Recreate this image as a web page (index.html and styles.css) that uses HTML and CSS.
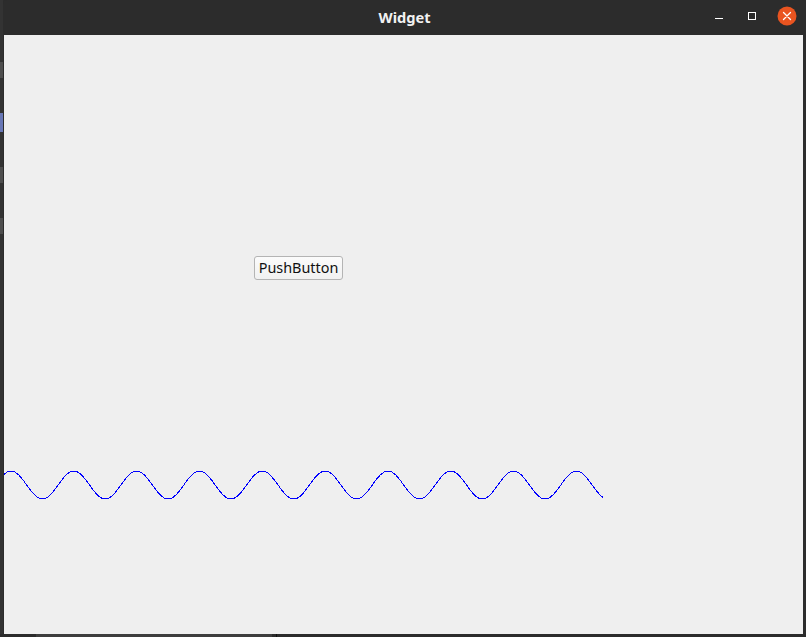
FILE: index.html
```html
<!DOCTYPE html>
<html>
<head>
<meta charset="utf-8">
<link rel="stylesheet" href="styles.css">
</head>
<body>
<div class="screen">
  <div class="desk-left">
    <div class="dock-item"></div>
    <div class="dock-item active"></div>
    <div class="dock-item"></div>
    <div class="dock-item"></div>
  </div>
  <div class="window">
    <div class="titlebar">
      <span class="title">Widget</span>
      <div class="controls">
        <span class="ctl min"><svg width="10" height="10" viewBox="0 0 10 10"><rect x="1" y="7" width="8" height="1" fill="#ffffff"/></svg></span>
        <span class="ctl max"><svg width="10" height="10" viewBox="0 0 10 10"><rect x="1.5" y="1.5" width="7" height="7" fill="none" stroke="#ffffff" stroke-width="1"/></svg></span>
        <span class="ctl close"><svg width="20" height="20" viewBox="0 0 20 20"><circle cx="10" cy="10" r="9.5" fill="#e95420"/><path d="M6.5 6.5 L13.5 13.5 M13.5 6.5 L6.5 13.5" stroke="#ffffff" stroke-width="1.3" stroke-linecap="round"/></svg></span>
      </div>
    </div>
    <div class="canvas">
      <button class="push">PushButton</button>
      <svg class="wave" width="599" height="599" viewBox="0 0 599 599">
        <path shape-rendering="crispEdges" fill="none" stroke="#0000ff" stroke-width="1" d="M -8.7 450
c 5.123,-7.172 10.049,-14 15.708,-14 c 5.659,0 10.585,6.828 15.708,14 c 5.123,7.172 10.049,14 15.708,14 c 5.659,0 10.585,-6.828 15.708,-14
c 5.123,-7.172 10.049,-14 15.708,-14 c 5.659,0 10.585,6.828 15.708,14 c 5.123,7.172 10.049,14 15.708,14 c 5.659,0 10.585,-6.828 15.708,-14
c 5.123,-7.172 10.049,-14 15.708,-14 c 5.659,0 10.585,6.828 15.708,14 c 5.123,7.172 10.049,14 15.708,14 c 5.659,0 10.585,-6.828 15.708,-14
c 5.123,-7.172 10.049,-14 15.708,-14 c 5.659,0 10.585,6.828 15.708,14 c 5.123,7.172 10.049,14 15.708,14 c 5.659,0 10.585,-6.828 15.708,-14
c 5.123,-7.172 10.049,-14 15.708,-14 c 5.659,0 10.585,6.828 15.708,14 c 5.123,7.172 10.049,14 15.708,14 c 5.659,0 10.585,-6.828 15.708,-14
c 5.123,-7.172 10.049,-14 15.708,-14 c 5.659,0 10.585,6.828 15.708,14 c 5.123,7.172 10.049,14 15.708,14 c 5.659,0 10.585,-6.828 15.708,-14
c 5.123,-7.172 10.049,-14 15.708,-14 c 5.659,0 10.585,6.828 15.708,14 c 5.123,7.172 10.049,14 15.708,14 c 5.659,0 10.585,-6.828 15.708,-14
c 5.123,-7.172 10.049,-14 15.708,-14 c 5.659,0 10.585,6.828 15.708,14 c 5.123,7.172 10.049,14 15.708,14 c 5.659,0 10.585,-6.828 15.708,-14
c 5.123,-7.172 10.049,-14 15.708,-14 c 5.659,0 10.585,6.828 15.708,14 c 5.123,7.172 10.049,14 15.708,14 c 5.659,0 10.585,-6.828 15.708,-14
c 5.123,-7.172 10.049,-14 15.708,-14 c 5.659,0 10.585,6.828 15.708,14 c 5.123,7.172 10.049,14 15.708,14 c 5.659,0 10.585,-6.828 15.708,-14"/>
      </svg>
    </div>
    <div class="desk-bottom">
      <div class="panel-seg"></div>
      <div class="panel-line"></div>
    </div>
  </div>
</div>
</body>
</html>
```

FILE: styles.css
```css
html, body {
  margin: 0;
  padding: 0;
  background: #2b2b2b;
  width: 806px;
  height: 637px;
  overflow: hidden;
}

.screen {
  display: flex;
  width: 806px;
  height: 637px;
}

.desk-left {
  width: 3px;
  flex: none;
  background: #333333;
  display: flex;
  flex-direction: column;
  padding-top: 62px;
  box-sizing: border-box;
}

.dock-item {
  height: 16px;
  margin-bottom: 35px;
  background: #4e4e4e;
}

.dock-item.active {
  height: 19px;
  background: #6877b6;
}

.window {
  width: 803px;
  flex: none;
  display: flex;
  flex-direction: column;
  background: #2c2c2c;
}

.titlebar {
  height: 35px;
  flex: none;
  position: relative;
  display: flex;
  align-items: center;
  justify-content: center;
  background: #2c2c2c;
  border-radius: 4px 4px 0 0;
}

.title {
  font-family: "Noto Sans", "DejaVu Sans", sans-serif;
  font-weight: 700;
  font-size: 14.6px;
  color: #f2f2f2;
  line-height: 35px;
}

.controls {
  position: absolute;
  right: 9px;
  top: 6px;
  display: flex;
  align-items: center;
}

.ctl {
  display: flex;
  align-items: center;
  justify-content: center;
  height: 20px;
}

.ctl.min {
  width: 10px;
  margin-right: 23px;
  margin-top: -1px;
}

.ctl.max {
  width: 10px;
  margin-right: 20px;
}

.ctl.close {
  width: 20px;
}

.canvas {
  position: relative;
  width: 799px;
  height: 599px;
  margin-left: 1px;
  background: #efefef;
  flex: none;
}

.push {
  position: absolute;
  left: 250px;
  top: 221px;
  width: 89px;
  height: 24px;
  padding: 0;
  margin: 0;
  box-sizing: border-box;
  border: 1px solid #b4b4b4;
  border-radius: 3px;
  background: linear-gradient(#fbfbfb, #f1f1f1);
  font-family: "Noto Sans", "DejaVu Sans", sans-serif;
  font-size: 14.4px;
  color: #111111;
  line-height: 20px;
}

.wave {
  position: absolute;
  left: 0;
  top: 0;
}

.desk-bottom {
  flex: 1;
  display: flex;
  background: #2b2b2b;
  margin-left: -4px;
}

.panel-seg {
  margin-left: 37px;
  width: 236px;
  background: #3d3d3d;
}

.panel-line {
  width: 1px;
  margin-left: 4px;
  background: #111111;
}
```
